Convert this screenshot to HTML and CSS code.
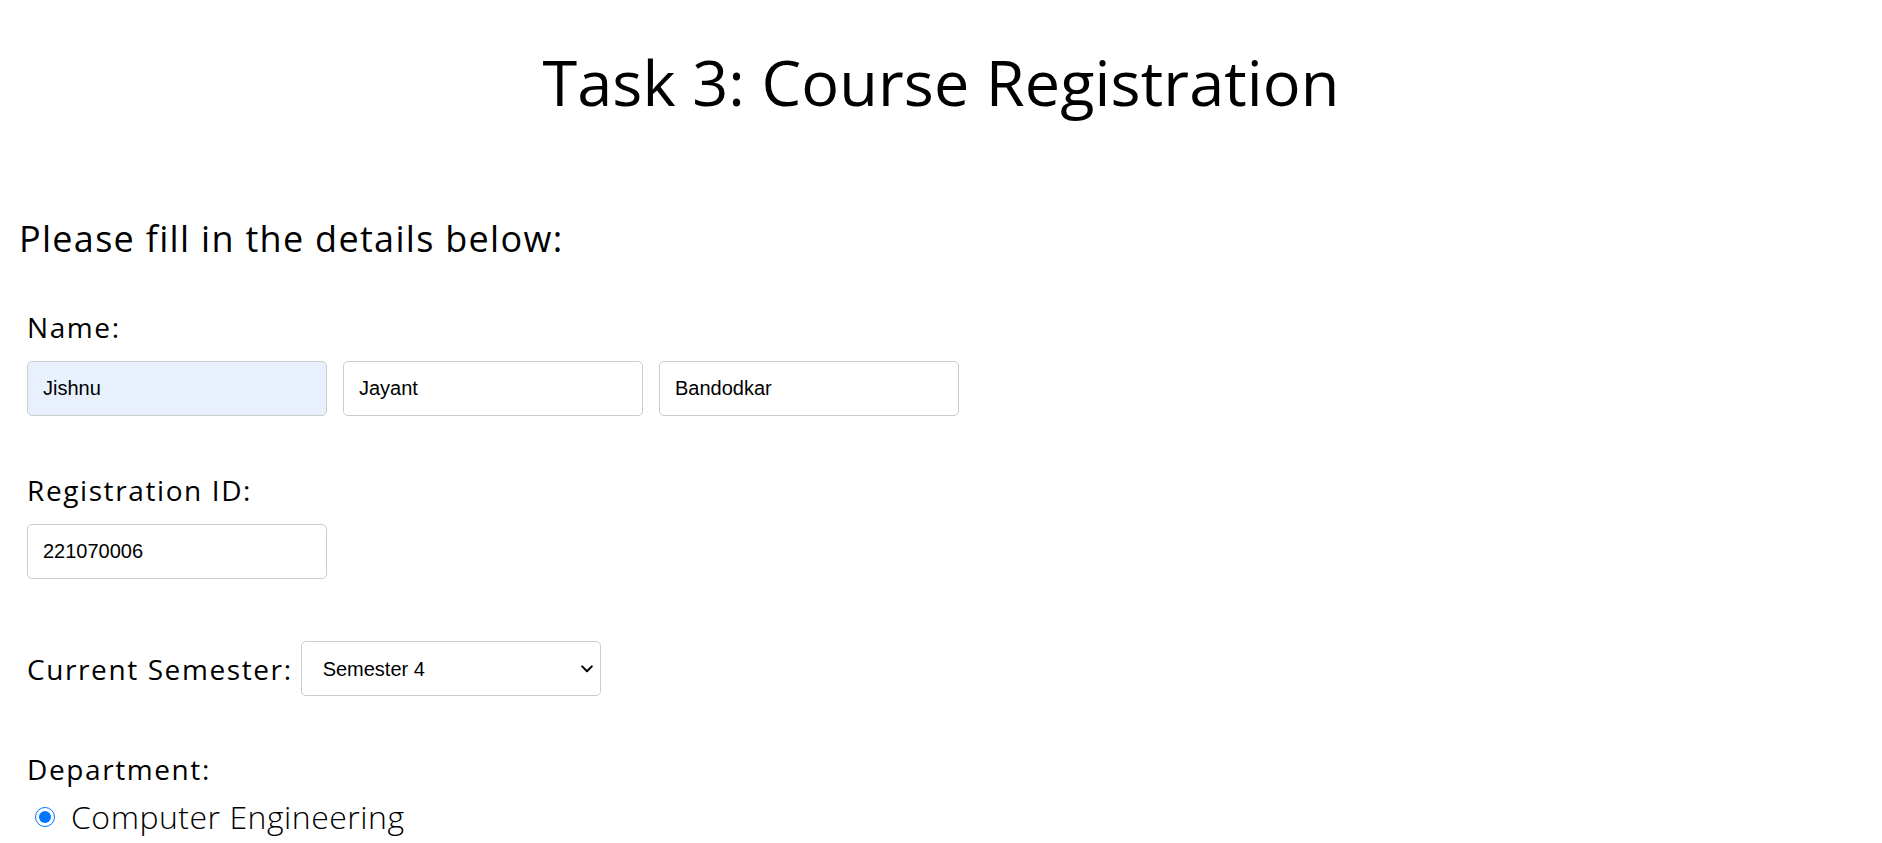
FILE: index.html
```html
<!DOCTYPE html>
<html lang="en">
<head>
<meta charset="utf-8">
<title>Task 3: Course Registration</title>
<link rel="stylesheet" href="styles.css">
</head>
<body>
  <h1 class="title">Task 3: Course Registration</h1>
  <main class="form">
    <h2 class="intro">Please fill in the details below:</h2>
    <section class="field field-name">
      <label class="label">Name:</label>
      <div class="row">
        <input class="text-input autofill" type="text" value="Jishnu">
        <input class="text-input" type="text" value="Jayant">
        <input class="text-input" type="text" value="Bandodkar">
      </div>
    </section>
    <section class="field field-reg">
      <label class="label">Registration ID:</label>
      <div class="row">
        <input class="text-input" type="text" value="221070006">
      </div>
    </section>
    <section class="field field-sem">
      <label class="label inline">Current Semester:</label>
      <div class="select-wrap">
        <select class="select">
          <option>Semester 1</option>
          <option>Semester 2</option>
          <option>Semester 3</option>
          <option selected>Semester 4</option>
        </select>
        <svg class="chevron" width="12" height="8" viewBox="0 0 12 8" aria-hidden="true">
          <path d="M1.2 1.4 L6 6.2 L10.8 1.4" fill="none" stroke="#000" stroke-width="2" stroke-linecap="round" stroke-linejoin="round"/>
        </svg>
      </div>
    </section>
    <section class="field field-dept">
      <label class="label">Department:</label>
      <label class="radio-row">
        <input class="radio" type="radio" name="dept" checked>
        <span class="radio-text">Computer Engineering</span>
      </label>
    </section>
  </main>
</body>
</html>
```
FILE: styles.css
```css
html, body {
  margin: 0;
  padding: 0;
  background: #ffffff;
  color: #000000;
}
body {
  font-family: "Open Sans", "Noto Sans", sans-serif;
}
.title {
  margin: 0;
  padding-top: 44px;
  text-align: center;
  font-size: 63px;
  font-weight: 400;
  line-height: 76px;
  letter-spacing: 0.1px;
}
.form {
  padding-left: 19px;
}
.intro {
  margin: 97px 0 0 0;
  font-size: 36px;
  font-weight: 400;
  line-height: 43px;
  letter-spacing: 1.3px;
}
.field {
  margin-left: 8px;
}
.field-name {
  margin-top: 50px;
}
.label {
  display: block;
  font-size: 28px;
  line-height: 34px;
  letter-spacing: 1.6px;
}
.label.inline {
  display: inline-block;
}
.row {
  display: flex;
  gap: 16px;
  margin-top: 17px;
}
.text-input {
  box-sizing: border-box;
  width: 300px;
  height: 55px;
  padding: 0 15px;
  border: 1px solid #cccccc;
  border-radius: 5px;
  font-family: "Liberation Sans", Arial, sans-serif;
  font-size: 20px;
  color: #000000;
  background: #ffffff;
  outline: none;
}
.text-input.autofill {
  background: #e8f0fe;
}
.field-reg {
  margin-top: 57px;
}
.field-sem {
  margin-top: 62px;
  display: flex;
  align-items: center;
  gap: 8px;
}
.select-wrap {
  position: relative;
  display: flex;
}
.select {
  box-sizing: border-box;
  width: 300px;
  height: 55px;
  padding: 0 30px 0 21px;
  border: 1px solid #cccccc;
  border-radius: 5px;
  font-family: "Liberation Sans", Arial, sans-serif;
  font-size: 20px;
  color: #000000;
  background: #ffffff;
  appearance: none;
  -webkit-appearance: none;
}
.chevron {
  position: absolute;
  right: 8px;
  top: 24px;
  pointer-events: none;
}
.field-dept {
  margin-top: 56px;
}
.radio-row {
  display: flex;
  align-items: center;
  gap: 16px;
  margin-top: 12px;
}
.radio {
  width: 20px;
  height: 20px;
  margin: 0 0 0 8px;
  accent-color: #0075ff;
}
.radio-text {
  font-size: 32px;
  font-weight: 300;
  line-height: 38px;
  letter-spacing: 0.5px;
}
```
